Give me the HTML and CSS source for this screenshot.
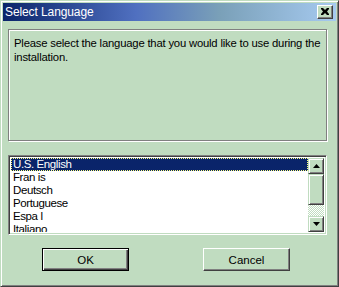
FILE: index.html
```html
<!DOCTYPE html>
<html>
<head>
<meta charset="utf-8">
<link rel="stylesheet" href="styles.css">
</head>
<body>
<div class="window">
  <div class="titlebar">
    <span class="title">Select Language</span>
    <span class="close"><svg width="8" height="7" viewBox="0 0 8 7"><path d="M0 0h2l2 2 2-2h2v1l-2 2.5 2 2.5v1h-2l-2-2-2 2h-2v-1l2-2.5-2-2.5z" fill="#000"/></svg></span>
  </div>
  <div class="body">
    <div class="message">Please select the language that you would like to use during the installation.</div>
    <div class="listbox">
      <ul class="items">
        <li class="selected">U.S. English</li>
        <li>Fran is</li>
        <li>Deutsch</li>
        <li>Portuguese</li>
        <li>Espa l</li>
        <li>Italiano</li>
      </ul>
      <div class="scrollbar">
        <div class="sbtn"><svg width="7" height="4" viewBox="0 0 7 4"><path d="M3.5 0L7 4H0z" fill="#000"/></svg></div>
        <div class="thumb"></div>
        <div class="track"></div>
        <div class="sbtn"><svg width="7" height="4" viewBox="0 0 7 4"><path d="M0 0h7L3.5 4z" fill="#000"/></svg></div>
      </div>
    </div>
    <div class="buttons">
      <button class="btn default">OK</button>
      <button class="btn">Cancel</button>
    </div>
  </div>
</div>
</body>
</html>
```

FILE: styles.css
```css
html, body {
  margin: 0;
  padding: 0;
  background: #c0dcc0;
}
.window {
  width: 339px;
  height: 287px;
  box-sizing: border-box;
  background: #c0dcc0;
  border-top: 1px solid #c0dcc0;
  border-left: 1px solid #c0dcc0;
  border-right: 1px solid #404040;
  border-bottom: 1px solid #404040;
  box-shadow: inset 1px 1px 0 #fff, inset -1px -1px 0 #808080;
  padding: 2px;
  display: flex;
  flex-direction: column;
  font-family: "Liberation Sans", Arial, sans-serif;
  font-size: 11px;
  color: #000;
}
.titlebar {
  height: 18px;
  background: linear-gradient(to right, #0a246a 0%, #5070c0 40%, #7aa0b8 65%, #a6caf0 100%);
  display: flex;
  align-items: center;
  justify-content: space-between;
  padding: 0 3px 0 2px;
}
.title {
  color: #fff;
  font-size: 12px;
  letter-spacing: -0.1px;
}
.close {
  width: 16px;
  height: 14px;
  box-sizing: border-box;
  background: #c0dcc0;
  border-top: 1px solid #fff;
  border-left: 1px solid #fff;
  border-right: 1px solid #404040;
  border-bottom: 1px solid #404040;
  box-shadow: inset -1px -1px 0 #808080;
  display: flex;
  align-items: center;
  justify-content: center;
}
.close svg { display: block; margin: 0 1px 1px 0; }
.body {
  flex: 1;
  display: flex;
  flex-direction: column;
  padding: 8px 9px 0 5px;
}
.message {
  height: 112px;
  box-sizing: border-box;
  border: 1px solid #808080;
  box-shadow: inset 1px 1px 0 #fff, 1px 1px 0 #fff;
  padding: 6px 1px 0 5px;
  line-height: 14px;
  font-size: 11.3px;
  letter-spacing: -0.2px;
}
.listbox {
  margin-top: 14px;
  height: 80px;
  box-sizing: border-box;
  border-top: 1px solid #808080;
  border-left: 1px solid #808080;
  border-right: 1px solid #fff;
  border-bottom: 1px solid #fff;
  box-shadow: inset 1px 1px 0 #404040, inset -1px -1px 0 #c0dcc0;
  padding: 2px;
  display: flex;
  background: #fff;
  overflow: hidden;
}
.items {
  list-style: none;
  margin: 0;
  padding: 0;
  flex: 1;
  overflow: hidden;
  background: #fff;
}
.items li {
  height: 13px;
  line-height: 13px;
  padding-left: 2px;
  font-size: 11.5px;
  letter-spacing: -0.4px;
  white-space: pre;
}
.items li.selected {
  background: #0a246a;
  color: #fff;
  outline: 1px dotted #ffff80;
  outline-offset: -1px;
}
.scrollbar {
  width: 16px;
  display: flex;
  flex-direction: column;
  background: #c0dcc0;
}
.sbtn, .thumb {
  box-sizing: border-box;
  background: #c0dcc0;
  border-top: 1px solid #c0dcc0;
  border-left: 1px solid #c0dcc0;
  border-right: 1px solid #404040;
  border-bottom: 1px solid #404040;
  box-shadow: inset 1px 1px 0 #fff, inset -1px -1px 0 #808080;
}
.sbtn {
  height: 16px;
  display: flex;
  align-items: center;
  justify-content: center;
}
.thumb { height: 31px; }
.track {
  flex: 1;
  background-color: #c0dcc0;
  background-image: repeating-conic-gradient(#fff 0 25%, #c0dcc0 0 50%);
  background-size: 2px 2px;
}
.buttons {
  display: flex;
  justify-content: space-between;
  padding: 13px 37px 0 34px;
}
.btn {
  width: 87px;
  height: 23px;
  box-sizing: border-box;
  background: #c0dcc0;
  font-family: "Liberation Sans", Arial, sans-serif;
  font-size: 11.5px;
  color: #000;
  border-top: 1px solid #fff;
  border-left: 1px solid #fff;
  border-right: 1px solid #404040;
  border-bottom: 1px solid #404040;
  box-shadow: inset -1px -1px 0 #808080;
  padding: 0;
  margin: 0;
}
.btn.default {
  border: 1px solid #000;
  box-shadow: inset 1px 1px 0 #fff, inset -1px -1px 0 #404040, inset -2px -2px 0 #808080;
}
```
